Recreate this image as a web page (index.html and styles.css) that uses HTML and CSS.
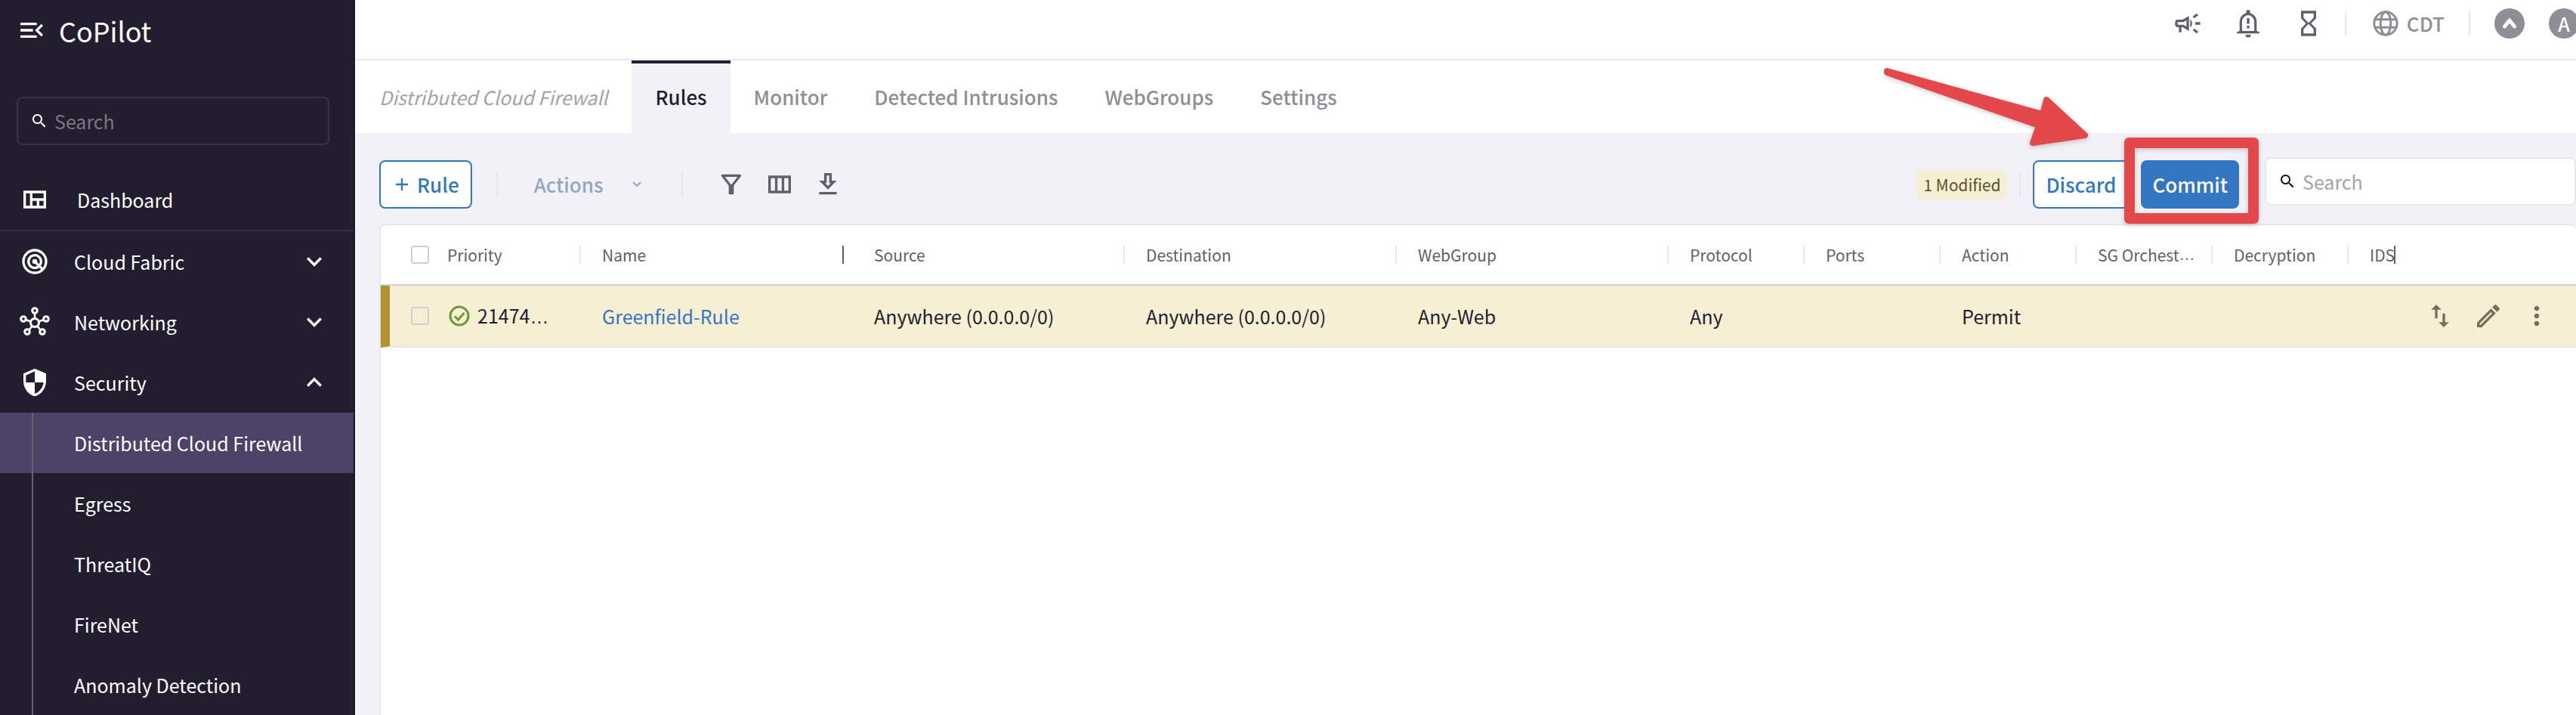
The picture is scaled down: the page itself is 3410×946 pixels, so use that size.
FILE: index.html
```html
<!DOCTYPE html>
<html lang="en">
<head>
<meta charset="utf-8">
<title>CoPilot - Distributed Cloud Firewall</title>
<link rel="stylesheet" href="styles.css">
</head>
<body>
<div class="app">
  <aside class="sidebar">
    <div class="brand">
      <button class="icon-button" type="button" aria-label="Collapse menu"><svg class="icon" viewBox="0 0 24 24"><path d="M3 18h13v-2H3v2zm0-5h10v-2H3v2zm0-7v2h13V6H3zm18 9.59L17.42 12 21 8.41 19.59 7l-5 5 5 5L21 15.59z"/></svg></button>
      <span class="brand-name">CoPilot</span>
    </div>
    <label class="search search-dark">
      <svg class="icon-small" viewBox="0 0 24 24"><path d="M15.5 14h-.79l-.28-.27C15.41 12.59 16 11.11 16 9.5 16 5.91 13.09 3 9.5 3S3 5.91 3 9.5 5.91 16 9.5 16c1.61 0 3.09-.59 4.23-1.57l.27.28v.79l5 4.99L20.49 19l-4.99-5zm-6 0C7.01 14 5 11.99 5 9.5S7.01 5 9.5 5 14 7.01 14 9.5 11.99 14 9.5 14z"/></svg>
      <input class="search-input" type="text" placeholder="Search" aria-label="Search menu">
    </label>
    <nav class="menu">
      <a class="menu-row menu-dashboard" href="#"><svg class="icon" viewBox="0 0 24 24"><path fill-rule="evenodd" d="M3 5h18v14H3zM5 7v10h3.200V7zM10.200 7v4H19V7zM10.200 13v4h3.400v-4zM15.600 13v4H19v-4z"/></svg><span class="menu-label">Dashboard</span></a>
      <a class="menu-row" href="#"><svg class="icon" viewBox="0 0 24 24"><g fill="none" stroke="currentColor" stroke-width="2"><circle cx="12" cy="12" r="9"/><path d="M15.400 15.700A5 5 0 1 1 17 12c0 1.100-.3 2-.8 2.700"/><path d="M12 12l6.400 6.400"/></g><circle cx="12" cy="12" r="2"/></svg><span class="menu-label">Cloud Fabric</span><svg class="icon" viewBox="0 0 24 24"><path d="M16.590 8.590L12 13.170 7.410 8.590 6 10l6 6 6-6z"/></svg></a>
      <a class="menu-row" href="#"><svg class="icon" viewBox="0 0 40 40"><g fill="none" stroke="currentColor" stroke-width="3"><circle cx="20" cy="21" r="5.500"/><circle cx="20" cy="5" r="3.300"/><circle cx="5" cy="16" r="3.300"/><circle cx="35" cy="16" r="3.300"/><circle cx="10" cy="33" r="3.300"/><circle cx="30" cy="33" r="3.300"/><path stroke-width="2.500" d="M20 8v8M8 17l7 2.500M32 17l-7 2.500M12.500 30.500l4-5M27.500 30.500l-4-5"/></g></svg><span class="menu-label">Networking</span><svg class="icon" viewBox="0 0 24 24"><path d="M16.590 8.590L12 13.170 7.410 8.590 6 10l6 6 6-6z"/></svg></a>
      <a class="menu-row" href="#"><svg class="icon" viewBox="0 0 24 24"><path d="M12 1L3 5v6c0 5.550 3.840 10.740 9 12 5.160-1.260 9-6.450 9-12V5l-9-4zm0 10.990h7c-.53 4.120-3.280 7.790-7 8.940V12H5V6.300l7-3.110v8.800z"/></svg><span class="menu-label">Security</span><svg class="icon" viewBox="0 0 24 24"><path d="M7.410 15.410L12 10.830l4.590 4.580L18 14l-6-6-6 6z"/></svg></a>
      <a class="submenu-row submenu-active" href="#">Distributed Cloud Firewall</a>
      <a class="submenu-row" href="#">Egress</a>
      <a class="submenu-row" href="#">ThreatIQ</a>
      <a class="submenu-row" href="#">FireNet</a>
      <a class="submenu-row" href="#">Anomaly Detection</a>
    </nav>
  </aside>

  <main class="main">
    <header class="topbar">
      <div class="top-actions">
        <button class="icon-button" type="button" aria-label="Announcements"><svg class="icon" viewBox="0 0 24 24"><path d="M18 11v2h4v-2h-4zm-2 6.610c.96.71 2.210 1.650 3.200 2.390.4-.53.8-1.070 1.200-1.600-.99-.74-2.240-1.680-3.200-2.400-.4.54-.8 1.080-1.200 1.610zM20.400 5.600c-.4-.53-.8-1.070-1.200-1.600-.99.74-2.240 1.680-3.200 2.400.4.53.8 1.070 1.200 1.600.96-.72 2.210-1.650 3.200-2.400zM4 9c-1.100 0-2 .9-2 2v2c0 1.100.9 2 2 2h1v4h2v-4h1l5 3V6L8 9H4zm5.030 1.710L11 9.530v4.940l-1.970-1.180-.55-.29H4v-2h4.480l.55-.29zM15.500 12c0-1.330-.58-2.530-1.500-3.350v6.690c.92-.81 1.500-2.010 1.500-3.340z"/></svg></button>
        <button class="icon-button" type="button" aria-label="Notifications"><svg class="icon" viewBox="0 0 40 40"><path fill="none" stroke="currentColor" stroke-width="3.200" d="M10.300 31V18a9.700 10.500 0 0 1 19.400 0v13"/><path d="M17.500 8V4.500a2.500 2.500 0 0 1 5 0V8zM16.500 35h7a3.500 3.500 0 0 1-7 0zM18.300 13h3.400v7.500h-3.400zM18.300 23h3.400v3.500h-3.400zM5 33.300v-1.500l3-1.800h24l3 1.800v1.500z"/></svg></button>
        <button class="icon-button" type="button" aria-label="Tasks"><svg class="icon" viewBox="0 0 24 24"><path d="M6 2v6h.01L6 8.010 10 12l-4 4 .01.01H6V22h12v-5.990h-.01L18 16l-4-4 4-3.990-.01-.01H18V2H6zm10 14.500V20H8v-3.500l4-4 4 4zm-4-5l-4-4V4h8v3.500l-4 4z"/></svg></button>
      </div>
      <button class="timezone" type="button"><svg class="icon" viewBox="0 0 24 24"><g fill="none" stroke="currentColor" stroke-width="1.800"><circle cx="12" cy="12" r="9.100"/><ellipse cx="12" cy="12" rx="4.100" ry="9.100"/><path d="M3.500 8.900h17M3.500 15.100h17"/></g></svg>CDT</button>
      <div class="profile">
        <button class="round" type="button" aria-label="Aviatrix"><svg class="icon" viewBox="0 0 40 40"><path fill="none" stroke="currentColor" stroke-width="5" stroke-linecap="round" stroke-linejoin="round" d="M13.500 24L20 16l6.500 8"/></svg></button>
        <button class="round" type="button" aria-label="Account">A</button>
      </div>
    </header>

    <nav class="tabs">
      <span class="page-title">Distributed Cloud Firewall</span>
      <a class="tab tab-active" href="#">Rules</a>
      <a class="tab" href="#">Monitor</a>
      <a class="tab" href="#">Detected Intrusions</a>
      <a class="tab" href="#">WebGroups</a>
      <a class="tab" href="#">Settings</a>
    </nav>

    <div class="toolbar">
      <button class="button button-outline" type="button"><svg class="plus" viewBox="0 0 14 14"><path d="M7 0v14M0 7h14"/></svg>Rule</button>
      <button class="actions-menu" type="button">Actions<svg class="caret" viewBox="0 0 12 8"><path d="M1 1l5 5 5-5"/></svg></button>
      <div class="table-tools">
        <button class="icon-button" type="button" aria-label="Filter"><svg class="icon" viewBox="0 0 24 24"><path d="M7 6h10l-5.010 6.300L7 6zm-2.750-.39C6.270 8.200 10 13 10 13v6c0 .55.45 1 1 1h2c.55 0 1-.45 1-1v-6s3.720-4.800 5.740-7.390c.51-.66.04-1.610-.79-1.610H5.040c-.83 0-1.300.95-.79 1.610z"/></svg></button>
        <button class="icon-button" type="button" aria-label="Columns"><svg class="icon" viewBox="0 0 24 24"><path d="M3 5v14h18V5H3zm5.330 12H5V7h3.330v10zm5.340 0h-3.330V7h3.330v10zM19 17h-3.330V7H19v10z"/></svg></button>
        <button class="icon-button" type="button" aria-label="Download"><svg class="icon" viewBox="0 0 24 24"><path d="M19 9h-4V3H9v6H5l7 7 7-7zm-8 2V5h2v6h1.170L12 13.170 9.830 11H11zm-6 7h14v2H5z"/></svg></button>
      </div>
      <div class="commit-bar">
        <span class="badge">1 Modified</span>
        <span class="divider"></span>
        <button class="button button-outline" type="button">Discard</button>
        <div class="callout">
          <button class="button button-solid" type="button">Commit</button>
          <span class="callout-frame"></span>
          <svg class="callout-arrow" viewBox="0 0 280 116" aria-hidden="true"><path d="M10 8L216 65L221 46L272 93L203 103L211 80L10 10z"/></svg>
        </div>
      </div>
      <label class="search search-light">
        <svg class="icon-small" viewBox="0 0 24 24"><path d="M15.500 14h-.79l-.28-.27C15.410 12.590 16 11.110 16 9.500 16 5.910 13.090 3 9.500 3S3 5.910 3 9.500 5.910 16 9.500 16c1.610 0 3.090-.59 4.230-1.570l.27.28v.79l5 4.990L20.490 19l-4.990-5zm-6 0C7.010 14 5 11.990 5 9.500S7.010 5 9.500 5 14 7.010 14 9.500 11.990 14 9.500 14z"/></svg>
        <input class="search-input" type="text" placeholder="Search" aria-label="Search rules">
      </label>
    </div>

    <section class="panel">
      <table class="rules">
        <colgroup><col class="col-check"><col class="col-priority"><col class="col-name"><col class="col-source"><col class="col-wide"><col class="col-wide"><col class="col-narrow"><col class="col-narrow"><col class="col-narrow"><col class="col-narrow"><col class="col-narrow"><col class="col-ids"><col></colgroup>
        <thead>
          <tr>
            <th class="cell-check"><input class="tick" type="checkbox" aria-label="Select all rules"></th>
            <th class="cell-priority"><div class="head">Priority</div></th>
            <th><div class="head head-dark">Name</div></th>
            <th class="cell-source"><div class="head">Source</div></th>
            <th><div class="head">Destination</div></th>
            <th><div class="head">WebGroup</div></th>
            <th><div class="head">Protocol</div></th>
            <th><div class="head">Ports</div></th>
            <th><div class="head">Action</div></th>
            <th><div class="head">SG Orchest<span class="dots">…</span></div></th>
            <th><div class="head">Decryption</div></th>
            <th><div class="head head-dark">IDS</div></th>
            <th></th>
          </tr>
        </thead>
        <tbody>
          <tr class="modified">
            <td class="cell-check"><input class="tick" type="checkbox" aria-label="Select Greenfield-Rule"></td>
            <td class="cell-priority"><div class="priority"><svg class="status" viewBox="0 0 32 32"><circle cx="16" cy="16" r="12"/><path d="M10 16.500l4.500 4.500 8-9"/></svg><span>21474<span class="dots">…</span></span></div></td>
            <td><a class="rule-link" href="#">Greenfield-Rule</a></td>
            <td class="cell-source">Anywhere (0.0.0.0/0)</td>
            <td>Anywhere (0.0.0.0/0)</td>
            <td>Any-Web</td>
            <td>Any</td>
            <td></td>
            <td>Permit</td>
            <td></td>
            <td></td>
            <td></td>
            <td class="cell-tools"><div class="row-tools">
              <button class="icon-button" type="button" aria-label="Move rule"><svg class="icon" viewBox="0 0 24 24"><path d="M16 17.010V10h-2v7.010h-3L15 21l4-3.990h-3zM9 3L5 6.990h3V14h2V6.990h3L9 3z"/></svg></button>
              <button class="icon-button" type="button" aria-label="Edit rule"><svg class="icon" viewBox="0 0 24 24"><path d="M14.060 9.020l.92.92L5.920 19H5v-.92l9.060-9.060M17.660 3c-.25 0-.51.1-.7.29l-1.830 1.830 3.750 3.750 1.830-1.830c.39-.39.39-1.020 0-1.410l-2.340-2.340c-.2-.2-.45-.29-.71-.29zm-3.600 3.190L3 17.250V21h3.750L17.810 9.940l-3.750-3.750z"/></svg></button>
              <button class="icon-button" type="button" aria-label="More"><svg class="icon" viewBox="0 0 24 24"><path d="M12 8c1.100 0 2-.9 2-2s-.9-2-2-2-2 .9-2 2 .9 2 2 2zm0 2c-1.100 0-2 .9-2 2s.9 2 2 2 2-.9 2-2-.9-2-2-2zm0 6c-1.100 0-2 .9-2 2s.9 2 2 2 2-.9 2-2-.9-2-2-2z"/></svg></button>
            </div></td>
          </tr>
        </tbody>
      </table>
    </section>
  </main>
</div>
</body>
</html>
```
FILE: styles.css
```css
* {
  box-sizing: border-box;
}

body {
  margin: 0;
  overflow: hidden;
  background: #f2f1f7;
  color: #221e2f;
  font: 400 25px/40px "Noto Sans CJK SC", "Noto Sans", sans-serif;
}

a {
  color: inherit;
  text-decoration: none;
}

button,
input {
  margin: 0;
  padding: 0;
  border: 0;
  background: none;
  color: inherit;
  font: inherit;
}

.app {
  display: flex;
  height: 100vh;
}

.icon {
  display: block;
  flex: none;
  width: 40px;
  height: 40px;
  fill: currentColor;
}

.icon-small {
  flex: none;
  width: 24px;
  height: 24px;
  fill: currentColor;
}

.search-light .icon-small {
  color: #16131f;
}

.icon-button {
  display: block;
  flex: none;
}

/* Sidebar */

.sidebar {
  display: flex;
  flex: none;
  flex-direction: column;
  width: 470px;
  overflow: hidden;
  border-right: 2px solid #1a1626;
  background: #221e2f;
  color: #fff;
}

.brand {
  display: flex;
  align-items: center;
  gap: 16px;
  height: 80px;
  padding-left: 22px;
}

.brand-name {
  font-size: 36px;
}

.search {
  display: flex;
  align-items: center;
  gap: 8px;
  height: 64px;
  padding: 0 16px;
  border: 2px solid #e7e6ec;
  border-radius: 8px;
}

.search-input {
  flex: 1;
  min-width: 0;
  height: 40px;
  outline: 0;
}

.search-input::placeholder {
  color: #a3a2a8;
  opacity: 1;
}

.search-dark {
  margin: 48px 32px 32px 22px;
  border-color: #37304f;
}

.search-dark .search-input::placeholder {
  color: #7b7882;
}

.menu-row {
  display: flex;
  align-items: center;
  gap: 32px;
  height: 80px;
  padding: 0 32px 0 26px;
}

.menu-dashboard {
  gap: 36px;
  height: 82px;
  border-bottom: 2px solid #37304f;
}

.menu-label {
  flex: 1;
}

.submenu-row {
  display: block;
  height: 80px;
  padding-left: 98px;
  background: linear-gradient(#66616e, #66616e) 42px 0 / 2px 100% no-repeat;
  line-height: 80px;
  white-space: nowrap;
}

.submenu-active {
  background-color: #4c4369;
}

/* Top bar */

.main {
  display: flex;
  flex: 1;
  flex-direction: column;
  min-width: 0;
  overflow: hidden;
}

.topbar {
  display: flex;
  flex: none;
  align-items: flex-start;
  justify-content: flex-end;
  height: 80px;
  margin-right: -4px;
  padding-top: 11px;
  border-bottom: 2px solid #e7e6ec;
  background: #fff;
  color: #615f69;
}

.top-actions {
  display: flex;
  gap: 40px;
  padding-right: 28px;
}

.timezone {
  display: flex;
  align-items: center;
  gap: 8px;
  height: 32px;
  margin-top: 4px;
  padding: 0 32px;
  border-right: 2px solid #e7e6ec;
  border-left: 2px solid #e7e6ec;
  color: #8f8e96;
  font-size: 26px;
  font-weight: 500;
}

.profile {
  display: flex;
  gap: 32px;
  padding-left: 32px;
}

.round {
  width: 40px;
  height: 40px;
  border-radius: 50%;
  background: #8f8e96;
  color: #fff;
  font-weight: 500;
  line-height: 36px;
}

.tabs {
  display: flex;
  flex: none;
  height: 96px;
  padding-left: 32px;
  background: #fff;
  color: #8f8e96;
  font-size: 26px;
  font-weight: 500;
  line-height: 96px;
  white-space: nowrap;
}

.page-title {
  padding-right: 32px;
  color: #a3a2a8;
  font-size: 25px;
  font-style: italic;
  font-weight: 400;
}

.tab {
  padding: 0 31px;
}

.tab-active {
  border-top: 4px solid #221e2f;
  background: #f2f1f7;
  color: #221e2f;
  line-height: 88px;
}

/* Toolbar */

.toolbar {
  display: flex;
  flex: none;
  align-items: center;
  height: 120px;
  padding: 16px 0 0 32px;
  font-size: 26px;
  font-weight: 500;
  white-space: nowrap;
}

.button {
  display: flex;
  align-items: center;
  gap: 12px;
  height: 64px;
  padding: 0 15px;
  border-radius: 8px;
}

.button-outline {
  border: 2px solid #3377c4;
  background: #fff;
  color: #3377c4;
}

.button-solid {
  background: #3377c4;
  color: #fff;
}

.plus {
  width: 16px;
  height: 16px;
  margin-left: 5px;
  stroke: currentColor;
  stroke-width: 2;
}

.actions-menu {
  display: flex;
  align-items: center;
  gap: 38px;
  height: 32px;
  margin-left: 32px;
  padding: 0 52px 0 48px;
  border-right: 2px solid #e7e6ec;
  border-left: 2px solid #e7e6ec;
  color: #91a9c0;
}

.caret {
  width: 14px;
  height: 8px;
  fill: none;
  stroke: currentColor;
  stroke-width: 2;
}

.table-tools {
  display: flex;
  gap: 24px;
  padding-left: 44px;
  color: #615f69;
}

.commit-bar {
  display: flex;
  align-items: center;
  gap: 16px;
  margin-left: auto;
}

.badge {
  padding: 0 9px;
  border-radius: 8px;
  background: #f6efd4;
  color: #5e5120;
  font-size: 21px;
  font-weight: 400;
}

.divider {
  width: 2px;
  height: 32px;
  background: #e7e6ec;
}

.callout {
  position: relative;
}

/* The frame and arrow lie over the neighbouring controls. */
.callout-frame {
  position: absolute;
  inset: -30px -26px -20px -22px;
  border: 14px solid #e5484b;
  border-radius: 6px;
  filter: drop-shadow(0 2px 3px rgba(0, 0, 0, 0.2));
  pointer-events: none;
}

.callout-arrow {
  position: absolute;
  top: -126px;
  left: -346px;
  width: 280px;
  height: 116px;
  fill: #e5484b;
  stroke: #e5484b;
  stroke-width: 8;
  stroke-linejoin: round;
  filter: drop-shadow(0 2px 3px rgba(0, 0, 0, 0.2));
  pointer-events: none;
}

.search-light {
  width: 412px;
  margin: 0 0 8px 34px;
  background: #fff;
  font-size: 25px;
  font-weight: 400;
}

/* Rules table */

.panel {
  flex: 1;
  margin-left: 32px;
  overflow: hidden;
  border: 2px solid #e7e6ec;
  border-right: 0;
  border-bottom: 0;
  border-radius: 8px 8px 0 0;
  background: #fff;
}

.rules {
  width: 100%;
  border-spacing: 0;
  table-layout: fixed;
}

.rules th,
.rules td {
  height: 80px;
  padding: 0 0 0 28px;
  text-align: left;
  white-space: nowrap;
}

.rules th {
  border-bottom: 2px solid #d0cfd8;
  color: #615f69;
  font-size: 21px;
  font-weight: 400;
}

.rules td {
  height: 82px;
  border-bottom: 2px solid #e7e6ec;
}

.col-check { width: 78px; }
.col-priority { width: 187px; }
.col-name { width: 348px; }
.col-source { width: 372px; }
.col-wide { width: 360px; }
.col-narrow { width: 180px; }
.col-ids { width: 62px; }

.rules .cell-check {
  padding-left: 40px;
}

.modified {
  background: #f6efd4;
}

.rules .modified .cell-check {
  padding-left: 28px;
  border-left: 12px solid #b29132;
}

.rules .cell-priority {
  padding-left: 10px;
}

.rules .cell-source {
  padding-left: 40px;
}

.tick {
  display: block;
  width: 24px;
  height: 24px;
  border: 2px solid #d0cfd8;
  border-radius: 3px;
  appearance: none;
}

.head {
  display: flex;
  height: 24px;
  border-right: 2px solid #e7e6ec;
  line-height: 24px;
}

.head-dark {
  border-color: #615f69;
}

.dots {
  font-family: "Liberation Sans", sans-serif;
}

.priority {
  display: flex;
  align-items: center;
  gap: 8px;
}

.status {
  flex: none;
  width: 32px;
  height: 32px;
  fill: none;
  stroke: #6b9a3c;
  stroke-width: 3;
}

.rule-link {
  color: #3377c4;
}

.rules .cell-tools {
  padding: 0 32px 0 0;
}

.row-tools {
  display: flex;
  justify-content: flex-end;
  gap: 24px;
  color: #756f5e;
}
```
